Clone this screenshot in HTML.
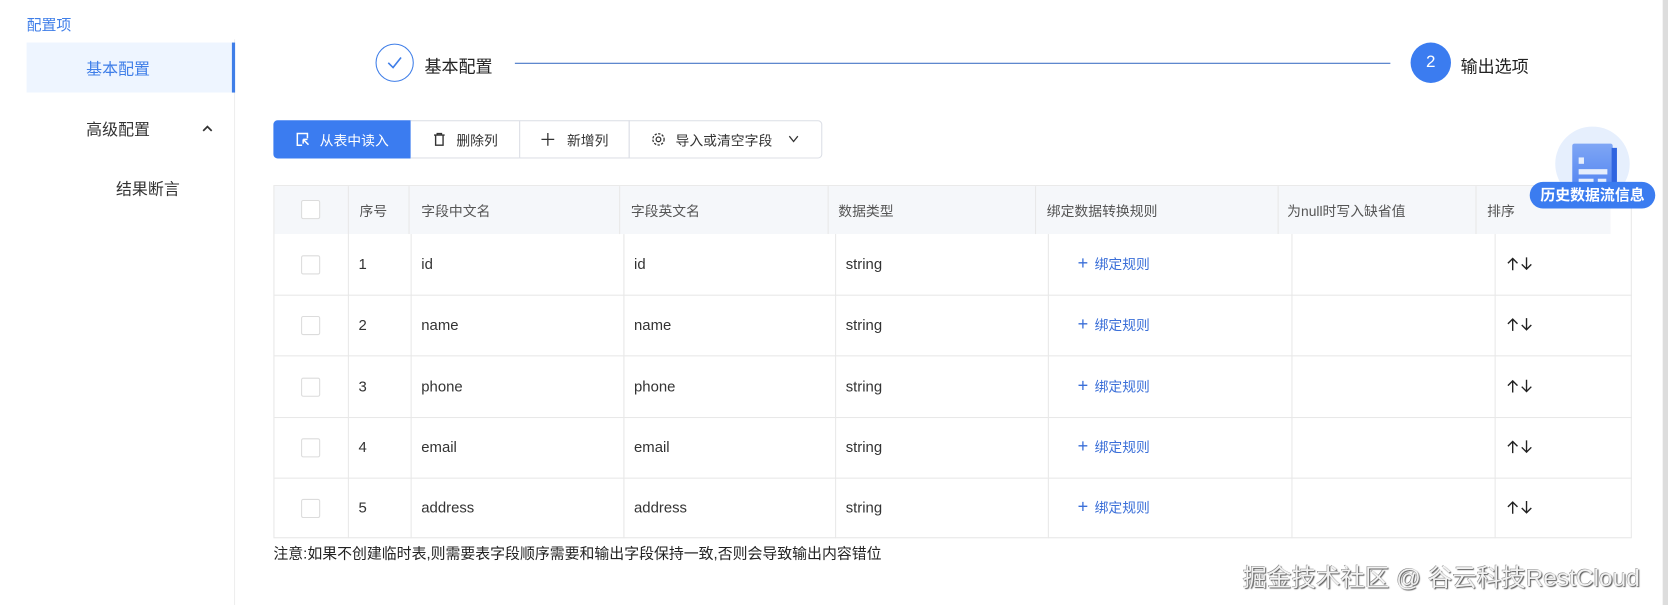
<!DOCTYPE html>
<html><head><meta charset="utf-8"><style>
html,body{margin:0;padding:0;width:1668px;height:605px;overflow:hidden;background:#fff}
#w{position:absolute;left:0;top:0;width:1568px;height:569px;transform:scale(1.06378);transform-origin:0 0;font-family:"Liberation Sans","Noto Sans CJK SC",sans-serif;color:#333}
.a{position:absolute;white-space:nowrap}
.vl{position:absolute;width:1px;background:#e8e8e8}
.hl{position:absolute;height:1px;background:#e8e8e8}
.cb{position:absolute;left:283px;width:16px;height:16px;border:1px solid #dcdcdc;border-radius:2px;background:#fff}
.t{font-size:14px;color:#333}
.h{font-size:13px;color:#555}
.rule{font-size:13px;color:#3b6fd8}
.btn{position:absolute;top:113px;height:36px;border:1px solid #dcdfe6;box-sizing:border-box;font-size:13px;display:flex;align-items:center;justify-content:center;background:#fff;color:#333}
</style></head><body><div id="w">
<svg width="0" height="0" style="position:absolute"><defs><g id="ar"><path d="M6 13 V2 M1.5 6.5 L6 2 L10.5 6.5 M19 1 V12 M14.5 7.5 L19 12 L23.5 7.5" fill="none" stroke="#222" stroke-width="1.3"/></g></defs></svg>
<div class="a" style="left:25px;top:13px;font-size:14px;color:#3f7ee8">配置项</div>
<div class="vl" style="left:220px;top:37px;height:532px;background:#eee"></div>
<div class="a" style="left:25px;top:40px;width:194px;height:47px;background:#eef5ff"></div>
<div class="a" style="left:218px;top:40px;width:3px;height:47px;background:#3f7ee8"></div>
<div class="a" style="left:81px;top:54px;font-size:15px;color:#3f7ee8">基本配置</div>
<div class="a" style="left:81px;top:111px;font-size:15px">高级配置</div>
<svg class="a" style="left:189px;top:116px" width="12" height="10"><path d="M2 7 L6 3 L10 7" fill="none" stroke="#333" stroke-width="1.6"/></svg>
<div class="a" style="left:109px;top:167px;font-size:15px">结果断言</div>

<div class="a" style="left:353px;top:41px;width:34px;height:34px;border:1px solid #3f7ee8;border-radius:50%"></div>
<svg class="a" style="left:362px;top:50px" width="18" height="18"><path d="M3 9 L7.5 13.5 L15 4" fill="none" stroke="#3f7ee8" stroke-width="1.5"/></svg>
<div class="a" style="left:399px;top:49px;font-size:16px;color:#222">基本配置</div>
<div class="a" style="left:484px;top:59px;width:823px;height:1px;background:#3d6fc4"></div>
<div class="a" style="left:1326px;top:40px;width:38px;height:38px;border-radius:50%;background:#3b7cf0;color:#fff;font-size:16px;text-align:center;line-height:38px">2</div>
<div class="a" style="left:1373px;top:49px;font-size:16px;color:#222">输出选项</div>

<div class="btn" style="left:257px;width:130px;background:#3b7cf0;border-color:#3b7cf0;color:#fff;border-radius:4px 0 0 4px">
<svg width="14" height="14" style="margin-right:8px"><path d="M11 6 V1.5 H1.5 V12.5 H6 M7 7 L12 12 M7 7 V11 M7 7 H11" fill="none" stroke="#fff" stroke-width="1.4"/></svg>从表中读入</div>
<div class="btn" style="left:386px;width:103px;border-left:none">
<svg width="14" height="14" style="margin-right:9px"><path d="M2 3 H12 M5 3 V1.5 H9 V3 M3.5 3 V12.5 H10.5 V3" fill="none" stroke="#333" stroke-width="1.3"/></svg>删除列</div>
<div class="btn" style="left:488px;width:104px">
<svg width="14" height="14" style="margin-right:11px"><path d="M7 1 V13 M1 7 H13" stroke="#333" stroke-width="1.2"/></svg>新增列</div>
<div class="btn" style="left:591px;width:182px;border-radius:0 4px 4px 0">
<svg width="14" height="14" style="margin-right:9px"><circle cx="7" cy="7" r="2.2" fill="none" stroke="#333" stroke-width="1.2"/><circle cx="7" cy="7" r="5.3" fill="none" stroke="#333" stroke-width="1.2" stroke-dasharray="2.2 1.3"/></svg>导入或清空字段
<svg width="12" height="10" style="margin-left:14px"><path d="M2 2 L6 7 L10 2" fill="none" stroke="#333" stroke-width="1.2"/></svg></div>

<div class="a" style="left:257px;top:174px;width:1277px;height:332px;border:1px solid #e8e8e8;box-sizing:border-box"></div>
<div class="a" style="left:258px;top:175px;width:1256px;height:45px;background:#f5f7fa"></div>
<div class="vl" style="left:327px;top:175px;height:45px"></div>
<div class="vl" style="left:384px;top:175px;height:45px"></div>
<div class="vl" style="left:582px;top:175px;height:45px"></div>
<div class="vl" style="left:778px;top:175px;height:45px"></div>
<div class="vl" style="left:973px;top:175px;height:45px"></div>
<div class="vl" style="left:1201px;top:175px;height:45px"></div>
<div class="vl" style="left:1387px;top:175px;height:45px"></div>
<div class="cb" style="top:188px"></div>
<div class="a h" style="left:338px;top:188px">序号</div>
<div class="a h" style="left:396px;top:188px">字段中文名</div>
<div class="a h" style="left:593px;top:188px">字段英文名</div>
<div class="a h" style="left:788px;top:188px">数据类型</div>
<div class="a h" style="left:984px;top:188px">绑定数据转换规则</div>
<div class="a h" style="left:1210px;top:188px">为null时写入缺省值</div>
<div class="a h" style="left:1398px;top:188px">排序</div>

<div class="vl" style="left:327px;top:220px;height:286px"></div>
<div class="vl" style="left:386px;top:220px;height:286px"></div>
<div class="vl" style="left:586px;top:220px;height:286px"></div>
<div class="vl" style="left:785px;top:220px;height:286px"></div>
<div class="vl" style="left:985px;top:220px;height:286px"></div>
<div class="vl" style="left:1214px;top:220px;height:286px"></div>
<div class="vl" style="left:1405px;top:220px;height:286px"></div>
<div class="hl" style="left:258px;top:277px;width:1276px"></div>
<div class="hl" style="left:258px;top:334px;width:1276px"></div>
<div class="hl" style="left:258px;top:392px;width:1276px"></div>
<div class="hl" style="left:258px;top:449px;width:1276px"></div>

<div class="cb" style="top:240px"></div><div class="a t" style="left:337px;top:240px">1</div><div class="a t" style="left:396px;top:240px">id</div><div class="a t" style="left:596px;top:240px">id</div><div class="a t" style="left:795px;top:240px">string</div><div class="a rule" style="left:1013px;top:238px"><span style="font-size:17px;margin-right:6px">+</span>绑定规则</div><svg class="a" style="left:1416px;top:241px" width="26" height="14"><use href="#ar"/></svg>
<div class="cb" style="top:297px"></div><div class="a t" style="left:337px;top:297px">2</div><div class="a t" style="left:396px;top:297px">name</div><div class="a t" style="left:596px;top:297px">name</div><div class="a t" style="left:795px;top:297px">string</div><div class="a rule" style="left:1013px;top:295px"><span style="font-size:17px;margin-right:6px">+</span>绑定规则</div><svg class="a" style="left:1416px;top:298px" width="26" height="14"><use href="#ar"/></svg>
<div class="cb" style="top:355px"></div><div class="a t" style="left:337px;top:355px">3</div><div class="a t" style="left:396px;top:355px">phone</div><div class="a t" style="left:596px;top:355px">phone</div><div class="a t" style="left:795px;top:355px">string</div><div class="a rule" style="left:1013px;top:353px"><span style="font-size:17px;margin-right:6px">+</span>绑定规则</div><svg class="a" style="left:1416px;top:356px" width="26" height="14"><use href="#ar"/></svg>
<div class="cb" style="top:412px"></div><div class="a t" style="left:337px;top:412px">4</div><div class="a t" style="left:396px;top:412px">email</div><div class="a t" style="left:596px;top:412px">email</div><div class="a t" style="left:795px;top:412px">string</div><div class="a rule" style="left:1013px;top:410px"><span style="font-size:17px;margin-right:6px">+</span>绑定规则</div><svg class="a" style="left:1416px;top:413px" width="26" height="14"><use href="#ar"/></svg>
<div class="cb" style="top:469px"></div><div class="a t" style="left:337px;top:469px">5</div><div class="a t" style="left:396px;top:469px">address</div><div class="a t" style="left:596px;top:469px">address</div><div class="a t" style="left:795px;top:469px">string</div><div class="a rule" style="left:1013px;top:467px"><span style="font-size:17px;margin-right:6px">+</span>绑定规则</div><svg class="a" style="left:1416px;top:470px" width="26" height="14"><use href="#ar"/></svg>

<div class="a" style="left:257px;top:510px;font-size:14px;color:#222">注意:如果不创建临时表,则需要表字段顺序需要和输出字段保持一致,否则会导致输出内容错位</div>
<div class="a" style="left:1168px;top:524px;font-size:23px;color:#f2f2f2;text-shadow:1px 1px 1px #555,-0.5px -0.5px 0 #888">掘金技术社区 @ 谷云科技RestCloud</div>

<div class="a" style="left:1462px;top:119px;width:70px;height:70px;border-radius:50%;background:#e6effd"></div>
<div class="a" style="left:1478px;top:135px;width:38px;height:46px;background:linear-gradient(#7fa6f5,#4f82f0);border-radius:2px"></div>
<div class="a" style="left:1515px;top:139px;width:5px;height:42px;background:#2f64e0"></div>
<div class="a" style="left:1484px;top:148px;width:5px;height:6px;background:#e6eefc"></div>
<div class="a" style="left:1484px;top:159px;width:27px;height:5px;background:#e6eefc"></div>
<div class="a" style="left:1484px;top:168px;width:14px;height:4px;background:#e6eefc"></div>
<div class="a" style="left:1502px;top:168px;width:8px;height:4px;background:#e6eefc"></div>
<div class="a" style="left:1438px;top:171px;width:118px;height:25px;border-radius:13px;background:#3b7cf0;color:#fff;font-size:14px;font-weight:bold;text-align:center;line-height:25px">历史数据流信息</div>
<div class="a" style="left:1563px;top:0;width:5px;height:569px;background:#ddd"></div>
</div></body></html>
